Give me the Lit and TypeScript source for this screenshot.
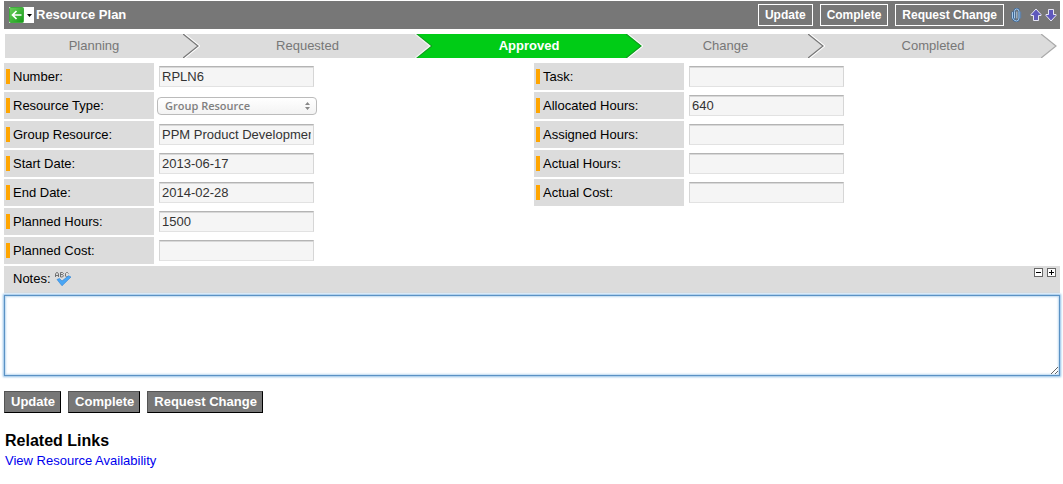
import { LitElement, html, svg, css } from "lit";
import { customElement, property } from "lit/decorators.js";
import { classMap } from "lit/directives/class-map.js";

interface Step {
  name: string;
  weight: number;
  active?: boolean;
}

interface Field {
  id: string;
  label: string;
  value: string;
  choice?: boolean;
}

const STEPS: Step[] = [
  { name: "Planning", weight: 178 },
  { name: "Requested", weight: 215 },
  { name: "Approved", weight: 194, active: true },
  { name: "Change", weight: 165 },
  { name: "Completed", weight: 216 },
];

const LEFT: Field[] = [
  { id: "number", label: "Number:", value: "RPLN6" },
  { id: "type", label: "Resource Type:", value: "Group Resource", choice: true },
  { id: "group", label: "Group Resource:", value: "PPM Product Development" },
  { id: "start", label: "Start Date:", value: "2013-06-17" },
  { id: "end", label: "End Date:", value: "2014-02-28" },
  { id: "planned-hours", label: "Planned Hours:", value: "1500" },
  { id: "planned-cost", label: "Planned Cost:", value: "" },
];

const RIGHT: Field[] = [
  { id: "task", label: "Task:", value: "" },
  { id: "allocated", label: "Allocated Hours:", value: "640" },
  { id: "assigned", label: "Assigned Hours:", value: "" },
  { id: "actual-hours", label: "Actual Hours:", value: "" },
  { id: "actual-cost", label: "Actual Cost:", value: "" },
];

const ACTIONS = ["Update", "Complete", "Request Change"];

@customElement("process-flow")
class ProcessFlow extends LitElement {
  @property({ attribute: false }) steps: Step[] = [];

  static styles = css`
    :host {
      display: block;
    }
    .flow {
      display: flex;
      list-style: none;
      margin: 0;
      padding: 0 2px 0 1px;
    }
    .step {
      display: flex;
      flex-basis: 17px;
      min-width: 0;
      height: 24px;
      color: #777;
      background: #dcdcdc;
      font-size: 13px;
      line-height: 24px;
      text-align: center;
    }
    .name {
      flex: 1;
      min-width: 0;
    }
    .active {
      color: #fff;
      background: #00cc16;
      font-weight: bold;
    }
    svg {
      display: block;
      flex: none;
    }
  `;

  private arrow(i: number) {
    const step = this.steps[i];
    const next = this.steps[i + 1];
    const fill = step.active ? "#00cc16" : "#dcdcdc";
    const behind = !next ? "#fff" : next.active ? "#00cc16" : "#dcdcdc";
    const inner = step.active ? "#119c1f" : next?.active ? "#f4f4f4" : next ? "#777" : "#aaa";
    const outer = next?.active ? "#119c1f" : "#fff";
    return html`<svg width="17" height="24" viewBox="0 0 17 24" aria-hidden="true">
      ${svg`<rect width="17" height="24" fill=${behind} />
      <path d="M0 0 L15.5 12 L0 24Z" fill=${fill} />
      <path d="M1 -0.5 L16.5 12 L1 24.5" fill="none" stroke=${outer} stroke-width="1.5" />
      <path d="M-0.5 -0.5 L15 12 L-0.5 24.5" fill="none" stroke=${inner} stroke-width="1.2" />`}
    </svg>`;
  }

  render() {
    return html`<ol class="flow">
      ${this.steps.map(
        (s, i) => html`<li
          class=${classMap({ step: true, active: !!s.active })}
          style="flex-grow:${s.weight}"
        >
          <span class="name">${s.name}</span>${this.arrow(i)}
        </li>`
      )}
    </ol>`;
  }
}

@customElement("app-root")
class AppRoot extends LitElement {
  static styles = css`
    :host {
      display: block;
      padding: 1px 3px 16px 4px;
      font-family: "Liberation Sans", Arial, sans-serif;
      font-size: 13px;
      color: #000;
      background: #fff;
    }
    * {
      box-sizing: border-box;
    }
    button {
      margin: 0;
      font-family: inherit;
      font-weight: bold;
      color: #fff;
      background: #777;
      white-space: nowrap;
    }
    svg {
      display: block;
    }
    .bar {
      display: flex;
      align-items: center;
      height: 28px;
      padding: 0 3px 0 5px;
      background: #777;
      color: #fff;
    }
    .back {
      display: flex;
      align-items: center;
      width: 25px;
      height: 16px;
      padding: 0;
      border: 0;
      background: #fff;
    }
    .title {
      flex: 1;
      margin: 0 0 0 2px;
      font-size: 13px;
      line-height: 16px;
    }
    .top-actions {
      display: flex;
      gap: 7px;
      margin-right: 7px;
    }
    .top-actions button {
      height: 22px;
      padding: 0 6px;
      border: 1px solid #fff;
      font-size: 12px;
      line-height: 16px;
    }
    .tool {
      padding: 0;
      border: 0;
      background: none;
    }
    .arrows {
      display: flex;
      gap: 3px;
      margin-left: 8px;
    }
    process-flow {
      margin: 5px 0;
    }
    .columns {
      display: grid;
      grid-template-columns: 1fr 1fr;
      gap: 4px;
    }
    .fields {
      display: flex;
      flex-direction: column;
      gap: 2px;
    }
    .field {
      display: flex;
      align-items: center;
      height: 27px;
    }
    .label {
      display: flex;
      align-items: center;
      gap: 3px;
      width: 150px;
      height: 27px;
      padding-left: 2px;
      background: #dcdcdc;
    }
    .mark {
      width: 4px;
      height: 15px;
      background: #ffa500;
    }
    .text {
      width: 155px;
      height: 21px;
      margin: 0 0 0 5px;
      padding: 1px 2px;
      border: 1px solid #d6d6d6;
      border-top-color: #b4b4b4;
      border-bottom-color: #e2e2e2;
      border-radius: 0;
      outline: 0;
      background: #f5f5f5;
      box-shadow: inset 0 1px 0 #d8d8d8;
      color: #333;
      font: 13px "Liberation Sans", Arial, sans-serif;
    }
    .select {
      display: grid;
      align-items: center;
      margin-left: 3px;
    }
    .select > * {
      grid-area: 1 / 1;
    }
    .select svg {
      justify-self: end;
      margin-right: 7px;
      pointer-events: none;
    }
    select {
      appearance: none;
      width: 160px;
      height: 18px;
      margin: 0;
      padding: 0 16px 0 7px;
      border: 1px solid #bbb;
      border-radius: 4px;
      background: linear-gradient(#fff, #f3f3f3);
      color: #808080;
      opacity: 1;
      font: 600 11px "Open Sans", "Noto Sans", sans-serif;
    }
    .notes {
      display: flex;
      align-items: center;
      height: 27px;
      margin-top: 2px;
      padding: 0 4px 2px 9px;
      background: #dcdcdc;
    }
    .spell {
      margin-left: 3px;
    }
    .sizes {
      display: flex;
      align-self: flex-start;
      gap: 4px;
      margin: 2px 0 0 auto;
    }
    textarea {
      display: block;
      width: 100%;
      height: 81px;
      margin: 2px 0 15px;
      padding: 2px;
      border: 1px solid #5b92c4;
      border-radius: 0;
      outline: 0;
      box-shadow: 0 0 2px 1px #8fbde6, inset 0 0 2px 1px #bcd8f0;
      font: inherit;
      resize: vertical;
    }
    .actions {
      display: flex;
      gap: 7px;
    }
    .actions button {
      height: 22px;
      padding: 0 5px 0 6px;
      border: 1px solid #555;
      border-right-color: #000;
      border-bottom-color: #000;
      font-size: 13px;
      line-height: 16px;
    }
    .related {
      padding: 18px 1px 0;
    }
    h2 {
      margin: 0;
      font-size: 16px;
      line-height: 20px;
    }
    a {
      display: inline-block;
      line-height: 20px;
      color: #0000ee;
      text-decoration: none;
    }
  `;

  private field(f: Field) {
    return html`<div class="field">
      <label class="label" for=${f.id}><span class="mark"></span>${f.label}</label>
      ${f.choice
        ? html`<span class="select">
            <select id=${f.id} disabled><option>${f.value}</option></select>
            <svg width="5" height="8" viewBox="0 0 5 8" aria-hidden="true">
              <path d="M0 3L2.5 0L5 3ZM0 5L2.5 8L5 5Z" fill="#888" />
            </svg>
          </span>`
        : html`<input class="text" id=${f.id} type="text" readonly .value=${f.value} />`}
    </div>`;
  }

  private verticalArrow(d: string) {
    return html`<svg width="12" height="14" viewBox="0 0 12 14">
      <path d=${d} fill="#5f58bd" stroke="#f4f4ff" stroke-width="0.9" />
    </svg>`;
  }

  render() {
    return html`
      <header class="bar">
        <button class="back" aria-label="Back">
          <svg width="25" height="16" viewBox="0 0 25 16">
            <defs>
              <linearGradient id="g" x1="0" y1="0" x2="1" y2="1">
                <stop offset="0" stop-color="#6cd05c" />
                <stop offset="1" stop-color="#159a18" />
              </linearGradient>
            </defs>
            <rect x="0.5" y="0.5" width="14" height="15" rx="1" fill="url(#g)" stroke="#3fae3c" />
            <path d="M12.5 8H4M7.5 4L3.5 8L7.5 12" fill="none" stroke="#fff" stroke-width="1.7" />
            <path d="M18 7H23L20.5 10Z" fill="#000" />
          </svg>
        </button>
        <h1 class="title">Resource Plan</h1>
        <div class="top-actions">${ACTIONS.map((a) => html`<button>${a}</button>`)}</div>
        <button class="tool" aria-label="Attachments">
          <svg width="11" height="14" viewBox="0 0 11 14">
            <g fill="none" stroke-linecap="round">
              <path d="M3.5 10V3.5Q3.5 1 5.7 1T8 3.5V10Q8 13 5.5 13T1.5 10V4.5" stroke="#39689c" stroke-width="2" />
              <path d="M3.5 10V3.5Q3.5 1 5.7 1T8 3.5V10Q8 13 5.5 13T1.5 10V4.5M5.8 4V10" stroke="#a9c9e8" />
              <path d="M9.7 4V10" stroke="#5d86b4" />
            </g>
          </svg>
        </button>
        <div class="arrows">
          <button class="tool" aria-label="Previous record">
            ${this.verticalArrow("M6 1L11 6.5V7.5H8.5V12.5H3.5V7.5H1V6.5Z")}
          </button>
          <button class="tool" aria-label="Next record">
            ${this.verticalArrow("M6 13L11 7.5V6.5H8.5V1.5H3.5V6.5H1V7.5Z")}
          </button>
        </div>
      </header>
      <process-flow .steps=${STEPS}></process-flow>
      <div class="columns">
        <div class="fields">${LEFT.map((f) => this.field(f))}</div>
        <div class="fields">${RIGHT.map((f) => this.field(f))}</div>
      </div>
      <div class="notes">
        <label for="notes">Notes:</label>
        <button class="tool spell" aria-label="Check spelling">
          <svg width="18" height="16" viewBox="0 0 18 16">
            <path
              d="M1.5 6V3L2.5 1.5H3.5L4.5 3V6M1.5 4.5H4.5M6.5 6V1.5H8.5L9.5 2.5L8.5 3.5H6.5M8.5 3.5L9.5 4.8L8.5 6H6.5M14.5 2.5L13.5 1.5H12.5L11.5 2.5V5L12.5 6H13.5L14.5 5"
              fill="none" stroke="#666" stroke-width="0.9"
            />
            <path d="M3 8.5L5.5 7.5L8 10L14.5 4.8L17 6L8 14.8Z" fill="#49a6f5" stroke="#2d82d4" stroke-width="0.6" />
          </svg>
        </button>
        <div class="sizes">
          <button class="tool" aria-label="Shrink notes">
            <svg width="9" height="9" viewBox="0 0 9 9">
              <rect x="0.5" y="0.5" width="8" height="8" fill="#fff" stroke="#666" />
              <path d="M2 4.5H7" stroke="#000" />
            </svg>
          </button>
          <button class="tool" aria-label="Expand notes">
            <svg width="9" height="9" viewBox="0 0 9 9">
              <rect x="0.5" y="0.5" width="8" height="8" fill="#fff" stroke="#666" />
              <path d="M2 4.5H7M4.5 2V7" stroke="#000" />
            </svg>
          </button>
        </div>
      </div>
      <textarea id="notes"></textarea>
      <div class="actions">${ACTIONS.map((a) => html`<button>${a}</button>`)}</div>
      <section class="related">
        <h2>Related Links</h2>
        <a href="#availability">View Resource Availability</a>
      </section>
    `;
  }
}
